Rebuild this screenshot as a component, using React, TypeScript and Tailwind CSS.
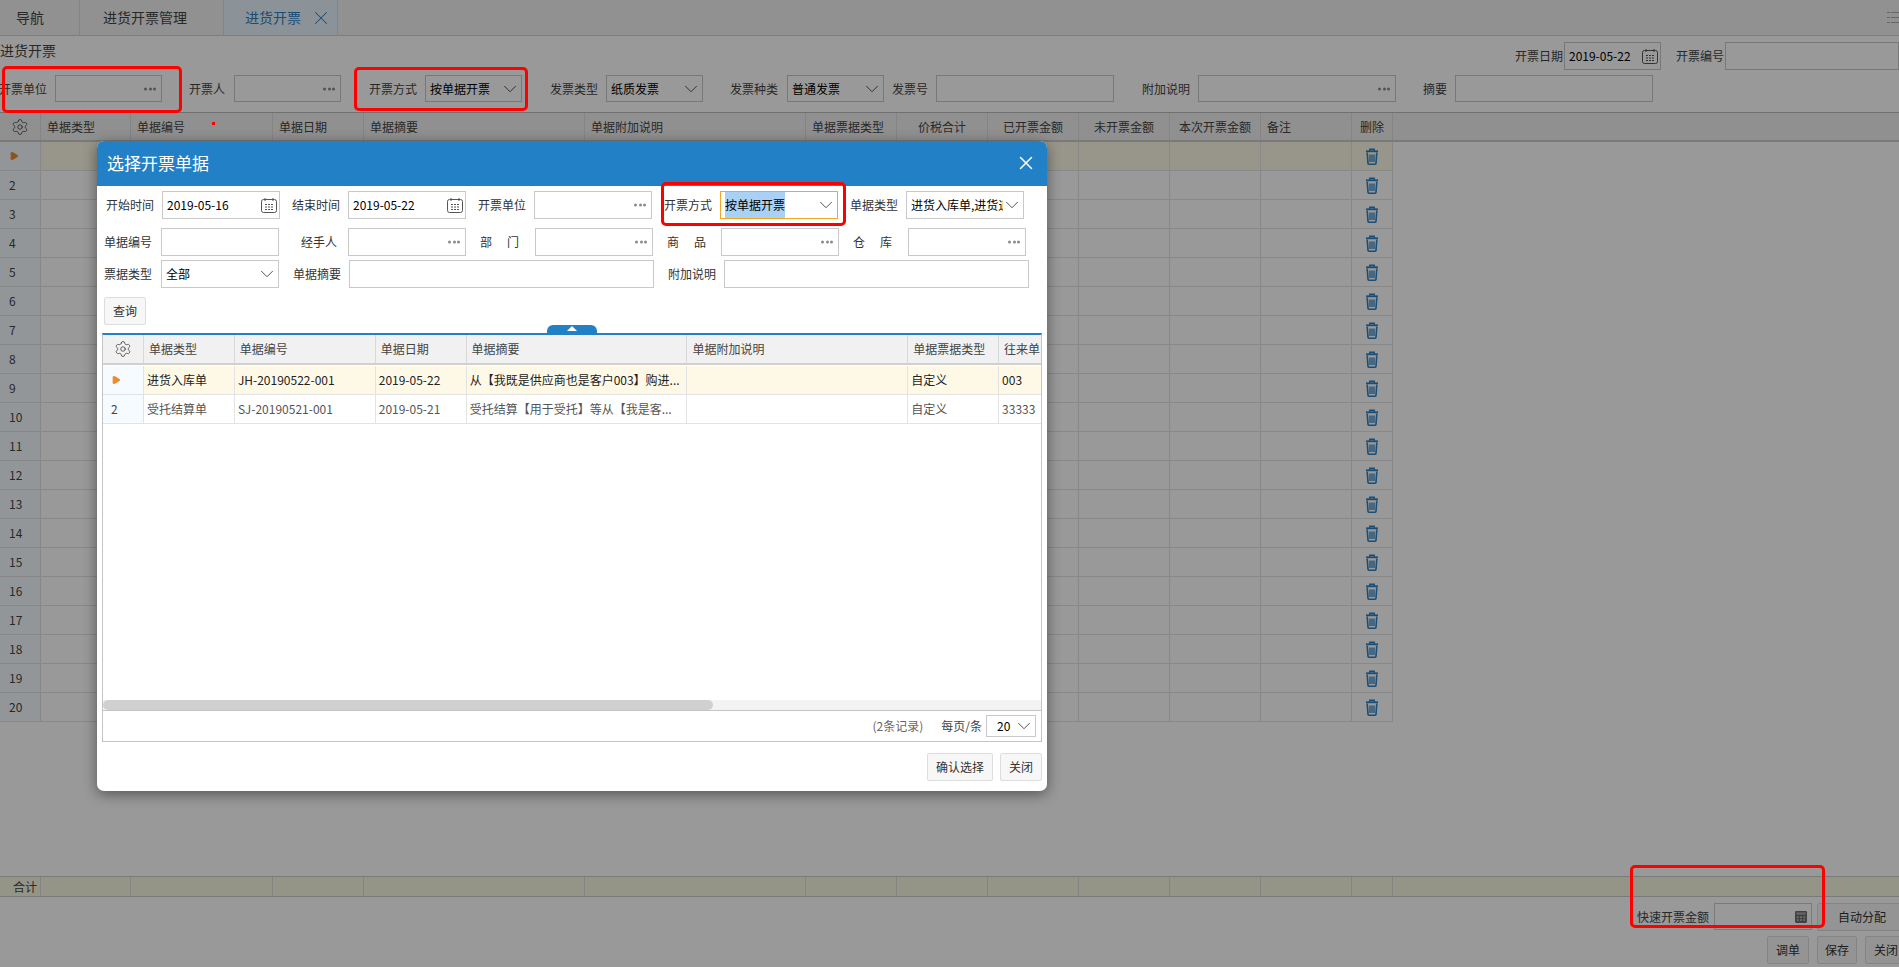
import React from 'react';
import { Settings, X, ChevronDown, Play } from 'lucide-react';

const cols = [90, 142, 91, 221, 221, 91, 91, 91, 91, 91, 91, 41];
const heads = ['单据类型', '单据编号', '单据日期', '单据摘要', '单据附加说明', '单据票据类型', '价税合计', '已开票金额', '未开票金额', '本次开票金额', '备注', '删除'];
const centered = [false, false, false, false, false, false, true, true, true, true, false, true];
const rows = Array.from({ length: 20 }, (_, i) => i + 1);

const TrashIcon = () => (
  <svg width="14" height="17" viewBox="0 0 14 17" fill="none" stroke="#2a80c4" strokeWidth="1.4">
    <path d="M1 3.3h12" strokeWidth="1.8" />
    <path d="M4.8 3V1.2h4.4V3" />
    <path d="M2.2 4.5 3 15.2c0 .6.4 1 1 1h6c.6 0 1-.4 1-1l.8-10.7" strokeWidth="1.6" />
    <path d="M5 6.5v7.5M7 6.5v7.5M9 6.5v7.5" strokeWidth="1.3" />
  </svg>
);

const CalendarIcon = ({ color = '#555' }: { color?: string }) => (
  <svg width="16" height="15" viewBox="0 0 16 15" fill="none" stroke={color} strokeWidth="1">
    <rect x="0.5" y="1.5" width="15" height="13" rx="2" />
    <path d="M4 0v3M12 0v3" />
    <path d="M4 6.5h2M7 6.5h2M10 6.5h2M4 9h2M7 9h2M10 9h2M4 11.5h2M7 11.5h2M10 11.5h2" strokeWidth="1.2" />
  </svg>
);

const CalcIcon = () => (
  <svg width="12" height="12" viewBox="0 0 13 13">
    <rect x="0" y="0" width="13" height="13" rx="1.5" fill="#6e6e6e" />
    <rect x="1.5" y="1.5" width="10" height="2.5" fill="#a8a8a8" />
    <path d="M2 6h2v1.5H2zM5.5 6h2v1.5h-2zM9 6h2v1.5H9zM2 9h2v1.5H2zM5.5 9h2v1.5h-2zM9 9h2v1.5H9z" fill="#c4c4c4" />
  </svg>
);

const Dots = () => (
  <span className="absolute right-[5px] top-1/2 flex -translate-y-1/2 gap-[1.5px]">
    <i className="size-[3px] rounded-full bg-[#8a8a8a]" />
    <i className="size-[3px] rounded-full bg-[#8a8a8a]" />
    <i className="size-[3px] rounded-full bg-[#8a8a8a]" />
  </span>
);

// 查询框 / 下拉框 都用这个
const Field = ({ w, value, kind, orange, h = 'h-[28px]', selected }: { w: string; value?: string; kind?: 'dots' | 'select' | 'date'; orange?: boolean; h?: string; selected?: boolean }) => (
  <div className={`relative flex shrink-0 items-center whitespace-nowrap border bg-white pl-[4px] text-[12px] text-black ${w} ${h} ${orange ? 'border-[#f5a623]' : 'border-[#c9c9c9]'} ${kind === 'select' ? 'pr-[20px]' : ''}`}>
    {selected ? <span className="flex h-full items-center bg-[#a9d0f5]">{value}</span> : <span className="min-w-0 overflow-hidden">{value}</span>}
    {kind === 'dots' && <Dots />}
    {kind === 'select' && <ChevronDown className="absolute right-0 top-1/2 -translate-y-1/2" size={22} strokeWidth={1} color="#444" />}
    {kind === 'date' && (
      <span className="absolute right-[2px] top-[6px] flex"><CalendarIcon /></span>
    )}
  </div>
);

const Label = ({ w, ml, children }: { w: string; ml: string; children: React.ReactNode }) => (
  <span className={`shrink-0 whitespace-nowrap text-center text-[12px] leading-none text-[#333] ${w} ${ml}`}>{children}</span>
);

const Btn = ({ w, children, className = '' }: { w: string; children: React.ReactNode; className?: string }) => (
  <button className={`flex h-[28px] shrink-0 items-center justify-center rounded-[2px] border border-[#ddd] bg-[#f7f7f7] text-[12px] text-[#333] ${w} ${className}`}>{children}</button>
);

const RedBox = ({ className }: { className: string }) => (
  <div className={`pointer-events-none absolute z-30 rounded-[5px] border-[3px] border-[#f00] ${className}`} />
);

const PageGrid = () => (
  <div className="border-t border-[#bbb]">
    <div className="flex h-[29px] border-b-2 border-[#ccc] bg-[#f0f0f0] text-[12px] text-[#444]">
      <div className="flex w-[41px] items-center justify-center border-r border-[#ddd]">
        <Settings size={18} strokeWidth={1} color="#333" />
      </div>
      {heads.map((h, i) => (
        <div key={h} style={{ width: cols[i] }} className={`flex items-center border-r border-[#ddd] ${centered[i] ? 'justify-center' : 'pl-[6px]'}`}>
          {h}
        </div>
      ))}
    </div>
    {rows.map((r) => (
      <div key={r} className="flex h-[29px]">
        <div className="flex w-[41px] items-center border-r border-b border-[#e3e3e3] bg-[#f5fbff] pl-[9px] text-[12px] text-[#444]">
          {r === 1 ? <Play size={10} fill="#ee8a2a" color="#ee8a2a" /> : r}
        </div>
        {cols.map((c, i) => (
          <div key={i} style={{ width: c }} className={`flex items-center justify-center border-r border-b border-[#e3e3e3] ${r === 1 ? 'bg-[#fef9e7]' : 'bg-white'}`}>
            {i === 11 && <TrashIcon />}
          </div>
        ))}
      </div>
    ))}
  </div>
);

const DialogGrid = () => {
  const w = [91, 141, 91, 221, 221, 91, 42];
  const hd = ['单据类型', '单据编号', '单据日期', '单据摘要', '单据附加说明', '单据票据类型', '往来单'];
  const data = [
    ['进货入库单', 'JH-20190522-001', '2019-05-22', '从【我既是供应商也是客户003】购进...', '', '自定义', '003'],
    ['受托结算单', 'SJ-20190521-001', '2019-05-21', '受托结算【用于受托】等从【我是客...', '', '自定义', '33333'],
  ];
  return (
    <div className="mx-[5px] flex h-[409px] flex-col border-x border-b border-[#c4c4c4] border-t-[2px] border-t-[#2280c6]">
      <div className="flex h-[30px] shrink-0 border-b-2 border-[#d0d0d0] bg-[#f1f1f1] text-[12px] text-[#444]">
        <div className="flex w-[41px] items-center justify-center border-r border-[#d8d8d8]">
          <Settings size={18} strokeWidth={1} color="#333" />
        </div>
        {hd.map((h, i) => (
          <div key={h} style={{ width: w[i] }} className={`flex items-center overflow-hidden whitespace-nowrap border-r border-[#d8d8d8] pl-[5px] ${i === 6 ? 'border-r-0' : ''}`}>
            {h}
          </div>
        ))}
      </div>
      {data.map((d, ri) => (
        <div key={ri} className={`flex h-[29px] shrink-0 border-b border-[#e3e3e3] text-[12px] ${ri === 0 ? 'mt-px text-[#222]' : 'text-[#555]'}`}>
          <div className="flex w-[41px] items-center border-r border-[#e3e3e3] bg-[#f5fbff] pl-[8px]">
            {ri === 0 ? <Play size={10} fill="#ee8a2a" color="#ee8a2a" /> : <span className="text-[#444]">2</span>}
          </div>
          {d.map((t, i) => (
            <div key={i} style={{ width: w[i] }} className={`flex items-center overflow-hidden whitespace-nowrap border-r border-[#e3e3e3] pl-[3px] ${ri === 0 ? 'bg-[#fef9e7]' : 'bg-white'} ${i === 6 ? 'border-r-0' : ''}`}>
              {t}
            </div>
          ))}
        </div>
      ))}
      <div className="flex-1" />
      <div className="h-[10px] shrink-0 bg-[#f3f3f3]">
        <div className="h-full w-[610px] rounded-full bg-[#d0d0d0]" />
      </div>
      <div className="flex h-[31px] shrink-0 items-center justify-end border-t border-[#c4c4c4] pr-[5px] text-[12px]">
        <span className="text-[#666]">(2条记录)</span>
        <span className="ml-[18px] text-[#444]">每页/条</span>
        <div className="relative ml-[4px] flex h-[22px] w-[50px] items-center border border-[#c9c9c9] pl-[10px] text-black">
          20
          <ChevronDown className="absolute right-0 top-1/2 -translate-y-1/2" size={22} strokeWidth={1} color="#444" />
        </div>
      </div>
    </div>
  );
};

const Dialog = () => (
  <div className="absolute left-[97px] top-[141px] z-20 flex h-[650px] w-[950px] flex-col overflow-hidden rounded-[7px] bg-white shadow-[0_3px_14px_rgba(0,0,0,0.45)]">
    <div className="flex h-[45px] shrink-0 items-center justify-between bg-[#2280c6] pb-[2px] pl-[10px] pr-[10px] text-white">
      <span className="text-[17px] leading-none">选择开票单据</span>
      <X size={22} strokeWidth={1.6} />
    </div>

    <div className="mt-[5px] flex h-[28px] items-center">
      <Label w="w-[48px]" ml="ml-[9px]">开始时间</Label>
      <div className="ml-[8px]"><Field w="w-[118px]" value="2019-05-16" kind="date" /></div>
      <Label w="w-[48px]" ml="ml-[12px]">结束时间</Label>
      <div className="ml-[8px]"><Field w="w-[118px]" value="2019-05-22" kind="date" /></div>
      <Label w="w-[48px]" ml="ml-[12px]">开票单位</Label>
      <div className="ml-[8px]"><Field w="w-[118px]" kind="dots" /></div>
      <Label w="w-[48px]" ml="ml-[12px]">开票方式</Label>
      <div className="ml-[8px]"><Field w="w-[118px]" value="按单据开票" kind="select" orange selected /></div>
      <Label w="w-[48px]" ml="ml-[12px]">单据类型</Label>
      <div className="ml-[8px]"><Field w="w-[118px]" value="进货入库单,进货退货单" kind="select" /></div>
    </div>

    <div className="mt-[9px] flex h-[28px] items-center">
      <Label w="w-[48px]" ml="ml-[7px]">单据编号</Label>
      <div className="ml-[9px]"><Field w="w-[118px]" /></div>
      <Label w="w-[48px]" ml="ml-[16px]">经手人</Label>
      <div className="ml-[5px]"><Field w="w-[118px]" kind="dots" /></div>
      <Label w="w-[39px]" ml="ml-[14px]"><span className="flex justify-between"><span>部</span><span>门</span></span></Label>
      <div className="ml-[16px]"><Field w="w-[118px]" kind="dots" /></div>
      <Label w="w-[39px]" ml="ml-[14px]"><span className="flex justify-between"><span>商</span><span>品</span></span></Label>
      <div className="ml-[15px]"><Field w="w-[118px]" kind="dots" /></div>
      <Label w="w-[39px]" ml="ml-[14px]"><span className="flex justify-between"><span>仓</span><span>库</span></span></Label>
      <div className="ml-[16px]"><Field w="w-[118px]" kind="dots" /></div>
    </div>

    <div className="mt-[4px] flex h-[28px] items-center">
      <Label w="w-[48px]" ml="ml-[7px]">票据类型</Label>
      <div className="ml-[9px]"><Field w="w-[118px]" value="全部" kind="select" /></div>
      <Label w="w-[48px]" ml="ml-[14px]">单据摘要</Label>
      <div className="ml-[8px]"><Field w="w-[305px]" /></div>
      <Label w="w-[48px]" ml="ml-[14px]">附加说明</Label>
      <div className="ml-[8px]"><Field w="w-[305px]" /></div>
    </div>

    <div className="relative mt-[9px] h-[36px] pl-[7px]">
      <Btn w="w-[42px]">查询</Btn>
      <div className="absolute left-[450px] top-[28px] flex h-[8px] w-[50px] justify-center rounded-t-[6px] bg-[#2280c6] pt-[1px]">
        <i className="size-0 border-x-[5px] border-b-[5px] border-x-transparent border-b-white" />
      </div>
    </div>

    <DialogGrid />

    <div className="mt-[11px] flex justify-end gap-[7px] pr-[5px]">
      <Btn w="w-[66px]">确认选择</Btn>
      <Btn w="w-[42px]">关闭</Btn>
    </div>
  </div>
);

export default function App() {
  return (
    <div className="relative h-[967px] w-[1899px] overflow-hidden bg-white font-['Noto_Sans_CJK_SC',sans-serif] text-[12px] text-[#333]">
      {/* 顶部页签 */}
      <div className="flex h-[36px] items-center border-b border-[#d0d0d0] bg-[#f2f2f2] text-[14px] text-[#444]">
        <div className="flex h-full w-[80px] items-center border-r border-[#ddd] pl-[16px]">导航</div>
        <div className="flex h-full w-[144px] items-center border-r border-[#ddd] pl-[23px]">进货开票管理</div>
        <div className="flex h-full w-[114px] items-center border-r border-[#ddd] bg-[#eaf5fd] pl-[21px] text-[#2a80c4]">
          进货开票
          <X className="ml-[9px]" size={22} strokeWidth={1.1} />
        </div>
        <div className="ml-auto flex flex-col gap-[4px]">
          <div className="flex gap-px"><i className="h-px w-[3px] bg-[#aaa]" /><i className="h-px w-[8px] bg-[#aaa]" /></div>
          <div className="flex gap-px"><i className="h-px w-[3px] bg-[#aaa]" /><i className="h-px w-[8px] bg-[#aaa]" /></div>
          <div className="flex gap-px"><i className="h-px w-[3px] bg-[#aaa]" /><i className="h-px w-[8px] bg-[#aaa]" /></div>
        </div>
      </div>

      {/* 单头 */}
      <div className="flex h-[39px] items-start pt-[6px]">
        <span className="mt-[-2px] text-[14px] leading-[20px] text-[#444]">进货开票</span>
        <span className="ml-auto mt-[8px] w-[48px] whitespace-nowrap text-[12px] leading-none text-[#444]">开票日期</span>
        <div className="ml-px"><Field w="w-[97px]" value="2019-05-22" kind="date" /></div>
        <span className="ml-[15px] mt-[8px] whitespace-nowrap leading-none text-[#444]">开票编号</span>
        <div className="ml-px"><Field w="w-[174px]" /></div>
      </div>
      <div className="flex h-[37px] items-start">
        <span className="ml-[-1px] mt-[8px] w-[48px] whitespace-nowrap leading-none text-[#444]">开票单位</span>
        <div className="ml-[8px]"><Field w="w-[107px]" kind="dots" h="h-[27px]" /></div>
        <span className="ml-[27px] mt-[8px] leading-none text-[#444]">开票人</span>
        <div className="ml-[9px]"><Field w="w-[107px]" kind="dots" h="h-[27px]" /></div>
        <span className="ml-[28px] mt-[8px] leading-none text-[#444]">开票方式</span>
        <div className="ml-[8px]"><Field w="w-[97px]" value="按单据开票" kind="select" h="h-[27px]" /></div>
        <span className="ml-[28px] mt-[8px] leading-none text-[#444]">发票类型</span>
        <div className="ml-[8px]"><Field w="w-[97px]" value="纸质发票" kind="select" h="h-[27px]" /></div>
        <span className="ml-[27px] mt-[8px] leading-none text-[#444]">发票种类</span>
        <div className="ml-[9px]"><Field w="w-[97px]" value="普通发票" kind="select" h="h-[27px]" /></div>
        <span className="ml-[8px] mt-[8px] leading-none text-[#444]">发票号</span>
        <div className="ml-[8px]"><Field w="w-[178px]" h="h-[27px]" /></div>
        <span className="ml-[28px] mt-[8px] leading-none text-[#444]">附加说明</span>
        <div className="ml-[8px]"><Field w="w-[198px]" kind="dots" h="h-[27px]" /></div>
        <span className="ml-[27px] mt-[8px] leading-none text-[#444]">摘要</span>
        <div className="ml-[8px]"><Field w="w-[198px]" h="h-[27px]" /></div>
      </div>

      <PageGrid />

      {/* 合计 */}
      <div className="mt-[154px] flex h-[21px] border-y border-[#ccc] bg-[#f8f8e2] text-[12px] text-[#444]">
        <div className="flex w-[41px] items-center justify-end border-r border-[#ddd] pr-[3px]">合计</div>
        {cols.map((c, i) => (
          <div key={i} style={{ width: c }} className="border-r border-[#ddd]" />
        ))}
      </div>

      {/* 底部按钮 */}
      <div className="flex flex-col items-end">
        <div className="mt-[6px] flex h-[27px] w-full items-center justify-end">
          <span className="whitespace-nowrap text-[#444]">快速开票金额</span>
          <div className="relative ml-[5px] h-[27px] w-[98px] border border-[#ccc] bg-white">
            <span className="absolute right-[4px] top-[7px] flex"><CalcIcon /></span>
          </div>
          <Btn w="w-[90px]" className="ml-[5px] mr-[-8px] h-[27px]">自动分配</Btn>
        </div>
        <div className="mt-[6px] flex w-[132px] shrink-0 gap-[8px]">
          <Btn w="w-[42px]">调单</Btn>
          <Btn w="w-[40px]">保存</Btn>
          <Btn w="w-[42px]">关闭</Btn>
        </div>
      </div>

      {/* 遮罩 */}
      <div className="absolute inset-0 z-10 bg-black/40" />
      <i className="absolute left-[212px] top-[122px] z-30 size-[3px] bg-[#f00]" />
      <Dialog />

      {/* 红框标注 */}
      <RedBox className="left-[2px] top-[66px] h-[47px] w-[180px]" />
      <RedBox className="left-[354px] top-[67px] h-[44px] w-[174px]" />
      <RedBox className="left-[661px] top-[182px] h-[44px] w-[185px]" />
      <RedBox className="left-[1630px] top-[865px] h-[63px] w-[195px]" />
    </div>
  );
}
